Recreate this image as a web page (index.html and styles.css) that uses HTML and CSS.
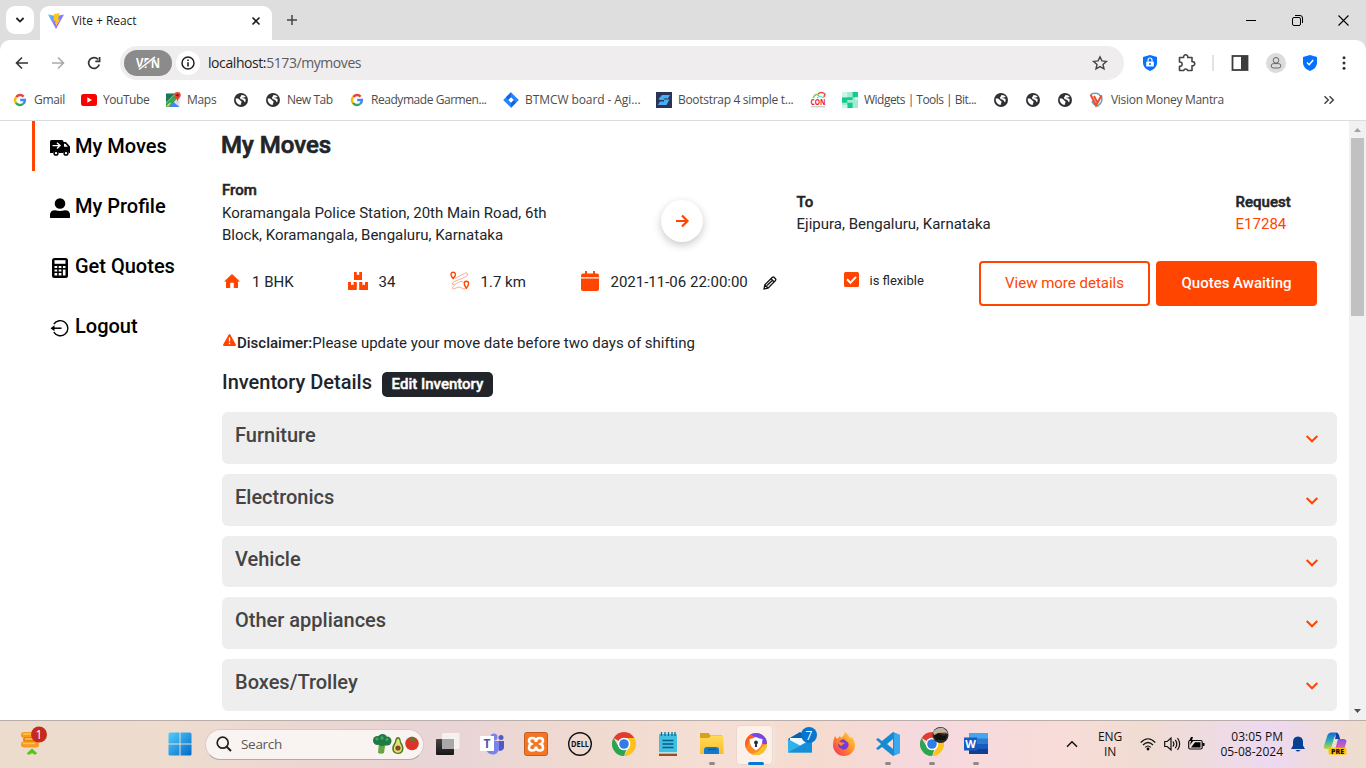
FILE: index.html
```html
<!DOCTYPE html>
<html lang="en">
<head>
<meta charset="utf-8">
<title>Vite + React</title>
<link rel="stylesheet" href="styles.css">
</head>
<body>
<svg class="defs" width="0" height="0">
  <defs>
    <symbol id="globe" viewBox="0 0 16 16"><circle cx="8" cy="8" r="7" fill="#303134"/><path d="M2.800 6.500c1.800-.2 3.200.2 3.700 1.300.5 1 1.700.7 2 1.900.2 1-.8 1.700-.7 3.300C4.800 12.700 2.300 10.200 2.800 6.500zM8.400 3c1.500-.2 3.700.5 4.400 2-1.100.5-3 .2-3.500 1 .8.400 2.600.2 3.200 1.200.5.900.2 2.200-.7 3-.8-.6-.8-1.700-1.700-2.200C8.900 7.500 7.100 7.300 7 5.800 7 4.500 8.400 4.400 8.400 3z" fill="#fff"/></symbol>
    <symbol id="google" viewBox="0 0 16 16"><g fill="none" stroke-width="2.400"><path d="M4.200 4.900A4.900 4.900 0 0 1 11.600 4.600" stroke="#ea4335"/><path d="M3.900 10.800A4.900 4.900 0 0 1 4.200 4.900" stroke="#fbbc05"/><path d="M11.100 11.900A4.900 4.900 0 0 1 3.900 10.800" stroke="#34a853"/><path d="M8.200 8h4.700a4.900 4.900 0 0 1-1.800 3.900" stroke="#4285f4"/></g></symbol>
    <symbol id="chrome" viewBox="0 0 24 24"><path d="M12 0a12 12 0 0 1 10.400 6H12a6 6 0 0 0-5.200 3L1.600 6A12 12 0 0 1 12 0z" fill="#e33b2e"/><path d="M22.400 6A12 12 0 0 1 12 24l5.200-9a6 6 0 0 0 0-6L15 6z" fill="#fcc31e"/><path d="M1.600 6l5.200 9a6 6 0 0 0 7.500 2.600L12 24A12 12 0 0 1 1.600 6z" fill="#2da44e"/><circle cx="12" cy="12" r="6.200" fill="#fff"/><circle cx="12" cy="12" r="4.800" fill="#2f7de9"/></symbol>
    <symbol id="chev" viewBox="0 0 14 10"><path d="M1.700 2l5.300 5.300L12.300 2" fill="none" stroke="#ff4500" stroke-width="2"/></symbol>
    <linearGradient id="win" gradientUnits="userSpaceOnUse" x1="0" y1="0" x2="24" y2="24"><stop offset="0" stop-color="#53d0fb"/><stop offset="1" stop-color="#0067c9"/></linearGradient>
    <linearGradient id="vite" x1="0" y1="0" x2="1" y2="1"><stop offset="0" stop-color="#41c8ff"/><stop offset="1" stop-color="#bd34fe"/></linearGradient>
    <linearGradient id="fold" x1="0" y1="0" x2="0" y2="1"><stop offset="0" stop-color="#ffda58"/><stop offset="1" stop-color="#f9bd2b"/></linearGradient>
    <linearGradient id="fox" x1="1" y1="0" x2="0" y2="1"><stop offset="0" stop-color="#ffe04a"/><stop offset=".5" stop-color="#ff8a26"/><stop offset="1" stop-color="#f0286a"/></linearGradient>
    <linearGradient id="cop1" x1="0" y1="0" x2="0" y2="1"><stop offset="0" stop-color="#1669d5"/><stop offset=".5" stop-color="#2aaeb4"/><stop offset="1" stop-color="#c0d831"/></linearGradient>
    <linearGradient id="cop2" x1="0" y1="0" x2="0" y2="1"><stop offset="0" stop-color="#8456e8"/><stop offset="1" stop-color="#f5609b"/></linearGradient>
    <linearGradient id="dark" x1="0" y1="0" x2="0" y2="1"><stop offset="0" stop-color="#454545"/><stop offset="1" stop-color="#171717"/></linearGradient>
  </defs>
</svg>

<header class="tabstrip">
  <div class="tab-search"><svg width="10" height="8" viewBox="0 0 10 8"><path d="M1.400 2l3.600 3.600L8.600 2" fill="none" stroke="#1f1f1f" stroke-width="1.800"/></svg></div>
  <div class="tab">
    <svg width="16" height="16" viewBox="0 0 16 16"><path d="M0 1.500L8 16l8-14.500L8 3z" fill="url(#vite)"/><path d="M11.500 0L6 1.100 5.600 8l2-.4L7 11l1.200-.4-.8 3.800L12 6.500l-1.900.3z" fill="#ffc51d"/></svg>
    <span class="tab-title">Vite + React</span>
    <svg class="tab-close" width="10" height="10" viewBox="0 0 10 10"><path d="M1.500 1.500l7 7M8.500 1.500l-7 7" stroke="#1f1f1f" stroke-width="1.600"/></svg>
  </div>
  <svg class="new-tab" width="12" height="12" viewBox="0 0 12 12"><path d="M6 1v10M1 6h10" stroke="#444" stroke-width="1.500"/></svg>
  <div class="win-buttons">
    <svg width="10" height="10" viewBox="0 0 10 10"><path d="M0 5.500h10" stroke="#000"/></svg>
    <svg width="11" height="11" viewBox="0 0 11 11"><rect x=".5" y="2.500" width="8" height="8" rx="1.500" fill="none" stroke="#000"/><path d="M3 .5h5A2.500 2.500 0 0 1 10.500 3v5" fill="none" stroke="#000"/></svg>
    <svg width="11" height="11" viewBox="0 0 11 11"><path d="M.5.5l10 10M10.500.5l-10 10" stroke="#000" stroke-width="1.100"/></svg>
  </div>
</header>

<div class="toolbar-back">
<nav class="toolbar">
  <svg class="nav-btn" width="16" height="16" viewBox="0 0 16 16"><path d="M14 8H3M8 2.500L2.500 8 8 13.500" fill="none" stroke="#333" stroke-width="1.600"/></svg>
  <svg class="nav-btn" width="16" height="16" viewBox="0 0 16 16"><path d="M2 8h11M8 2.500L13.500 8 8 13.500" fill="none" stroke="#aaa" stroke-width="1.600"/></svg>
  <svg class="nav-btn" width="16" height="16" viewBox="0 0 16 16"><path d="M13.200 9.500A5.400 5.400 0 1 1 12 4.300M13.600 2v4.300H9.300" fill="none" stroke="#333" stroke-width="1.700"/></svg>
  <div class="omnibox">
    <div class="vpn"><svg width="26" height="14" viewBox="0 0 26 14"><text x="1" y="11.800" class="vpn-text" textLength="24" lengthAdjust="spacingAndGlyphs">VPN</text><path d="M4.500 13.500L19 .8" stroke="#8b8b8b" stroke-width="3.200"/><path d="M4 13.500L20 .8" stroke="#fff" stroke-width="1.500"/></svg></div>
    <div class="info"><svg width="14" height="14" viewBox="0 0 14 14"><circle cx="7" cy="7" r="6" fill="none" stroke="#222" stroke-width="1.500"/><path d="M7 6.200v4.200M7 3.500v1.600" stroke="#222" stroke-width="1.600"/></svg></div>
    <span class="url"><b>localhost:</b>5173/mymoves</span>
    <svg class="star" width="16" height="16" viewBox="0 0 16 16"><path d="M8 1.800l1.900 4.100 4.500.5-3.400 3 1 4.500L8 11.600l-4 2.300 1-4.500-3.400-3 4.500-.5z" fill="none" stroke="#444" stroke-width="1.400"/></svg>
  </div>
  <div class="extensions">
    <svg width="14" height="16" viewBox="0 0 14 16"><path d="M7 0l7 2v5.500c0 4-2.800 6.900-7 8.500-4.200-1.600-7-4.500-7-8.500V2z" fill="#0572ff"/><rect x="3.200" y="6.500" width="7.600" height="5" rx=".6" fill="#fff"/><path d="M5 6.500V5a2 2 0 0 1 4 0v1.500" fill="none" stroke="#fff" stroke-width="1.200"/><circle cx="7" cy="9" r="1" fill="#0572ff"/></svg>
    <svg class="puzzle" width="20" height="20" viewBox="0 0 20 20"><path d="M4 4.500h3.700a2.100 2.100 0 1 1 4 0h4.300v4.200a2.100 2.100 0 1 1 0 4v4.800h-4.300a2.100 2.100 0 0 0-4 0H3.500v-4.200a2.200 2.200 0 1 0 0-4.300V4.500z" fill="none" stroke="#444" stroke-width="1.600" stroke-linejoin="round"/></svg>
    <i class="divider"></i>
    <svg class="panel" width="18" height="18" viewBox="0 0 18 18"><rect x="1.500" y="2" width="15" height="14" fill="#fff" stroke="#3c3c3c" stroke-width="1.800"/><path d="M10 2h7v14h-7z" fill="#3c3c3c"/></svg>
    <svg class="person" width="20" height="20" viewBox="0 0 20 20"><circle cx="10" cy="10" r="10" fill="#dcdcdc"/><circle cx="10" cy="7.300" r="2.800" fill="none" stroke="#666"/><rect x="5.200" y="10.600" width="9.600" height="4.400" rx="2.200" fill="none" stroke="#666"/></svg>
    <svg class="shield" width="14" height="16" viewBox="0 0 14 16"><path d="M7 0l7 2v5.500c0 4-2.800 6.900-7 8.500-4.200-1.600-7-4.500-7-8.500V2z" fill="#0572ff"/><path d="M4 7.500L6.200 9.700 10.200 5" fill="none" stroke="#fff" stroke-width="1.500"/></svg>
    <svg class="menu" width="4" height="14" viewBox="0 0 4 14"><g fill="#333"><circle cx="2" cy="1.700" r="1.500"/><circle cx="2" cy="7" r="1.500"/><circle cx="2" cy="12.300" r="1.500"/></g></svg>
  </div>
</nav>
</div>

<nav class="bookmarks">
  <span style="width:69px"><svg><use href="#google"/></svg>Gmail</span>
  <span class="tight" style="width:84px"><svg viewBox="0 0 16 16"><rect y="2" width="16" height="12" rx="2.500" fill="#f00"/><path d="M6.300 5.300v5.400L11 8z" fill="#fff"/></svg>YouTube</span>
  <span style="width:68px"><svg viewBox="0 0 16 16"><path d="M1 1.500h13.500V15H1z" fill="#dcdcdc"/><path d="M1 1.500h9L1 10.500z" fill="#16795a"/><path d="M1 15v-4L10 2h3v3L5 15z" fill="#34a853"/><path d="M3.500 15l5-5 6 5z" fill="#4285f4"/><path d="M1.500 14L5 10.500l1 1L3 15z" fill="#f5d04a"/><path d="M12.500 0A3.300 3.300 0 0 1 15.800 3.300c0 2.500-2.800 3-3.300 6.500-.5-3.500-3.300-4-3.300-6.500A3.300 3.300 0 0 1 12.500 0z" fill="#ea4335"/><circle cx="12.500" cy="3.300" r="1.200" fill="#7d1711"/></svg>Maps</span>
  <span style="width:32px"><svg><use href="#globe"/></svg></span>
  <span class="tight" style="width:84px"><svg><use href="#globe"/></svg>New Tab</span>
  <span class="tight" style="width:154px"><svg><use href="#google"/></svg>Readymade Garmen...</span>
  <span class="loose" style="width:153px"><svg viewBox="0 0 16 16"><path d="M8 .2L15.800 8 8 15.800.2 8z" fill="#2684ff"/><path d="M8 .2v5L5.300 8 3 5.200zM8 15.800v-5.100L10.700 8l2.300 2.800z" fill="#1264dc"/><path d="M8 5.300L10.700 8 8 10.700 5.300 8z" fill="#fff"/></svg>BTMCW board - Agi...</span>
  <span style="width:154px"><svg viewBox="0 0 16 16"><path d="M0 0h16v16H0z" fill="#2a3457"/><path d="M6 3h8l-2 3.500H7.500L8.500 8H4L2.500 7zM8 7.500h5.500L10.500 13H2l2-3.500h4z" fill="#48aef5"/></svg>Bootstrap 4 simple t...</span>
  <span style="width:32px"><svg viewBox="0 0 16 16"><path d="M3 6q3-6 6-2" fill="none" stroke="#6cdc3c" stroke-width="1.500"/><path d="M8 2q3-3 7 0l-1 3" fill="none" stroke="#f54336" stroke-width="1.500"/><path d="M7 6l3-2 4 2" fill="none" stroke="#39d7d0"/><text x="0.500" y="13" class="con-text" textLength="15" lengthAdjust="spacingAndGlyphs">CON</text><path d="M1 14.800h14" stroke="#bbb"/></svg></span>
  <span class="tight2" style="width:151px"><svg viewBox="0 0 16 16"><path d="M0 0h16v16H0z" fill="#a3ead0"/><path d="M0 5.300h5.300v5.400H0zM10.600 0H16v5.300h-5.400zM5.300 10.700h5.300V16H5.300zM5.300 5.300h5.300v2.700H5.300z" fill="#10cc93"/><path d="M0 0h5.300v5.300H0zM13 5.300h3v3h-3zM0 13h5.300v3H0z" fill="#cdf5e7"/></svg>Widgets | Tools | Bit...</span>
  <span style="width:32px"><svg><use href="#globe"/></svg></span>
  <span style="width:32px"><svg><use href="#globe"/></svg></span>
  <span style="width:32px"><svg><use href="#globe"/></svg></span>
  <span><svg viewBox="0 0 16 16"><path d="M2 2q8-2 9 2M12 3q3 6-3 11-5-1-6-5" fill="none" stroke="#62a8bb" stroke-width="1.500"/><path d="M1.500 2.500L7 13.500 12.500 3.500M5 4l3 6" fill="none" stroke="#ee4a2d" stroke-width="2"/></svg>Vision Money Mantra</span>
  <svg class="more" viewBox="0 0 12 10"><path d="M1.500 1.200L5.300 5 1.500 8.800M6.500 1.200L10.300 5 6.500 8.800" fill="none" stroke="#444" stroke-width="1.500"/></svg>
</nav>

<div class="page">
  <aside class="sidebar">
    <a class="side-item active"><svg viewBox="0 0 20 20"><path d="M1.500 2H12a1.500 1.500 0 0 1 1.500 1.500V4H16l4 4.500V15h-1.200a2.800 2.800 0 0 0-5.500 0H8.700a2.800 2.800 0 0 0-5.500 0H0V3.500A1.500 1.500 0 0 1 1.500 2z"/><path d="M2.500 7.600h7M7 4.800l3 2.800-3 2.800" fill="none" stroke="#fff" stroke-width="1.400"/><path d="M14 5.700h1.500L17.800 8.700H14z" fill="#fff"/><g fill="#fff" stroke="#000" stroke-width="1.500"><circle cx="6" cy="15.200" r="1.900"/><circle cx="16" cy="15.200" r="1.900"/></g></svg>My Moves</a>
    <a class="side-item"><svg viewBox="0 0 20 20"><circle cx="10" cy="5.500" r="5.300"/><path d="M0 19.500V17q0-4.500 5-4.700 5 1.200 10 0 5 .2 5 4.700v2.500q0 .5-1 .5H1q-1 0-1-.5z"/></svg>My Profile</a>
    <a class="side-item"><svg viewBox="0 0 20 20"><rect x="2" y="0" width="16" height="20" rx="2.500"/><path d="M4.500 2.200h11v3.600h-11z" fill="#fff"/><g fill="#fff"><path d="M4.500 8h2.700v2H4.500zM8.700 8h2.700v2H8.700zM12.900 8h2.600v2h-2.600zM4.500 11.500h2.700v2H4.500zM8.700 11.500h2.700v2H8.700zM4.500 15h2.700v2.600H4.500zM8.700 15h2.700v2.600H8.700zM12.900 11.500h2.600v6.100h-2.600z"/></g></svg>Get Quotes</a>
    <a class="side-item"><svg viewBox="0 0 20 20"><path d="M3.800 6.200A7.600 7.600 0 1 1 3.800 14.200" fill="none" stroke="#000" stroke-width="1.400"/><path d="M2 10.200h9.500" stroke="#000" stroke-width="1.500"/><path d="M.5 10.200L4.500 7.200v6z"/></svg>Logout</a>
  </aside>

  <main class="content">
    <h1>My Moves</h1>
    <section class="route">
      <div class="from"><strong>From</strong><p>Koramangala Police Station, 20th Main Road, 6th<br>Block, Koramangala, Bengaluru, Karnataka</p></div>
      <div class="arrow"><svg width="14" height="14" viewBox="0 0 14 14"><path d="M1 7h11M7 1.500L12.500 7 7 12.500" fill="none" stroke="#ff4500" stroke-width="2.200"/></svg></div>
      <div class="to"><strong>To</strong><p>Ejipura, Bengaluru, Karnataka</p></div>
      <div class="request"><strong>Request</strong><p>E17284</p></div>
    </section>

    <section class="stats">
      <div class="stat home"><svg width="16" height="14" viewBox="0 0 16 14"><path d="M8 0l8 7.500h-2V14H9.800V8.700H6.200V14H2V7.500H0z"/></svg>1 BHK</div>
      <div class="stat boxes"><svg width="20" height="18" viewBox="0 0 20 18"><path d="M6 0h2.800v3.300l1.200-.8 1.200.8V0H14v8H6zM0 10h3v3.200l1.300-.8 1.300.8V10H8.800v8H0zM11.200 10h3.200v3.200l1.300-.8 1.300.8V10h3v8h-8.800z"/></svg>34</div>
      <div class="stat km"><svg width="20" height="20" viewBox="0 0 20 20"><path d="M5 7.500L12 3.800q5-3.300 5.700-.8.400 1.900-2.700 3.200L5 10.200q-4 2-2.600 3 1.200 1 4-.6 5-3.500 6.700-1.500M4.500 14.500q-3 2-1.800 3 1.300.8 4-.7 3-1.600 4.500 0 2.500 2.300 6 0" fill="none" stroke="#ff9874" stroke-width=".8"/><path d="M3.200 1.200A2.200 2.200 0 0 1 5.400 3.400q0 1.600-2.200 4.100Q1 5 1 3.400a2.200 2.200 0 0 1 2.200-2.200zM16.400 10.300a2.200 2.200 0 0 1 2.200 2.200q0 1.800-2.200 4.600-2.200-2.800-2.200-4.600a2.200 2.200 0 0 1 2.200-2.200z" fill="#fff" stroke="#ff4500" stroke-width="1.400"/></svg>1.7 km</div>
      <div class="stat date"><svg width="18" height="20" viewBox="0 0 18 20"><path d="M4 0h2v2.500h6V0h2v2.500h2A2 2 0 0 1 18 4.500V6.200H0V4.500a2 2 0 0 1 2-2h2zM0 7.500h18V18a2 2 0 0 1-2 2H2a2 2 0 0 1-2-2z"/></svg>2021-11-06 22:00:00
        <svg class="pencil" width="14" height="14" viewBox="0 0 14 14"><path d="M1 13l.8-4.300L9.400 1.200Q10.300.6 11.200 1.500l1.300 1.300q.8.900 0 1.700L5 12.200zM8 2.700L11.200 6M2 9l3 3M4 9.500L9.800 4" fill="none" stroke="#111" stroke-width="1.300"/></svg></div>
      <div class="flex-check"><svg width="15" height="15" viewBox="0 0 15 15"><rect width="15" height="15" rx="1.500" fill="#ff4500"/><path d="M3 7.300l3.400 3.400L12 4.900" fill="none" stroke="#fff" stroke-width="2"/></svg>is flexible</div>
      <div class="actions"><button class="btn outline">View more details</button><button class="btn solid">Quotes Awaiting</button></div>
    </section>

    <p class="disclaimer"><svg width="13" height="12" viewBox="0 0 13 12"><path d="M6.500 0Q7 0 7.400.7l5.400 9.800Q13.300 12 12 12H1Q-.3 12 .2 10.500L5.600.7Q6 0 6.500 0z" fill="#ff4500"/><path d="M6.500 3.500v4M6.500 8.700v1.500" stroke="#fff" stroke-width="1.300"/></svg><b>Disclaimer:</b>Please update your move date before two days of shifting</p>

    <div class="inventory-head"><h2>Inventory Details</h2><button class="edit">Edit Inventory</button></div>
    <div class="accordion">
      <div class="acc"><span>Furniture</span><svg><use href="#chev"/></svg></div>
      <div class="acc"><span>Electronics</span><svg><use href="#chev"/></svg></div>
      <div class="acc"><span>Vehicle</span><svg><use href="#chev"/></svg></div>
      <div class="acc"><span>Other appliances</span><svg><use href="#chev"/></svg></div>
      <div class="acc"><span>Boxes/Trolley</span><svg><use href="#chev"/></svg></div>
    </div>
  </main>

  <div class="scrollbar">
    <svg width="7" height="4" viewBox="0 0 7 4"><path d="M0 4l3.500-4L7 4z" fill="#a3a3a3"/></svg>
    <i class="thumb"></i>
    <svg class="down" width="7" height="4" viewBox="0 0 7 4"><path d="M0 0l3.500 4L7 0z" fill="#505050"/></svg>
  </div>
</div>

<footer class="taskbar">
  <div class="weather"><svg width="28" height="30" viewBox="0 0 28 30"><g fill="#f59b20"><rect x="1" y="6" width="17" height="6" rx="3"/><rect x="3" y="11" width="17" height="5.500" rx="2.700" fill="#e98111"/><rect x="1" y="15.500" width="18" height="6" rx="3"/></g><path d="M3 8h12M5 13h12M3 17.500h12" stroke="#ffc457" stroke-width="1.400"/><path d="M12 22.500l5 4.600-1 1.400h-2L12 27l-2 1.500H7.500L7 27z" fill="#5bc414"/><circle cx="19" cy="8.500" r="8" fill="#c42b1c"/><text x="19" y="13" text-anchor="middle" class="badge-text">1</text></svg></div>
  <div class="apps">
    <svg class="start" width="24" height="24" viewBox="0 0 24 24"><path d="M.5 2q0-1.500 1.500-1.500h9.500v11H.5zM12.500.5H22q1.500 0 1.500 1.500v9.500h-11zM.5 12.500h11v11H2q-1.500 0-1.500-1.500zM12.500 12.500h11V22q0 1.500-1.500 1.500h-9.500z" fill="url(#win)"/></svg>
    <div class="search"><svg width="16" height="16" viewBox="0 0 16 16"><circle cx="6.700" cy="6.700" r="5.500" fill="none" stroke="#222" stroke-width="1.700"/><path d="M10.700 10.700L15 15" stroke="#222" stroke-width="2"/></svg><span>Search</span>
      <svg class="veg" width="46" height="21" viewBox="0 0 46 21"><path d="M6 8l-1 11q3 1.500 6 0l1-7 4-3z" fill="#64a845"/><g fill="#207a43"><circle cx="4.500" cy="6.500" r="4.500"/><circle cx="9.500" cy="4.500" r="4.500"/><circle cx="14" cy="7" r="4.500"/><circle cx="9" cy="8" r="4"/></g><g fill="#46a661"><circle cx="4" cy="5" r="1.500"/><circle cx="9" cy="4" r="1.700"/><circle cx="14" cy="5.500" r="1.500"/></g><path d="M25 3q2.500 0 3 5 3 4 2.400 7.500Q29.500 20 25 20q-5.500-.5-5.800-5 0-3.500 2.600-7Q22.500 3 25 3z" fill="#4f7a20"/><path d="M25 4.500q1.600.5 2 4.500 2.300 3.500 2 6-.7 3.700-4 3.700-4-.3-4.300-4 .3-3 2.300-6 .5-3.700 2-4.200z" fill="#dce57b"/><circle cx="25" cy="14" r="2.600" fill="#8a471e"/><circle cx="39" cy="9.500" r="6.800" fill="#dc3326"/><path d="M35 4l3 1 1-3 1.500 3 3-1-2 2.500 1 1-3-1-2 1.500V6.500z" fill="#3e8c34"/></svg></div>
    <div class="app"><svg viewBox="0 0 24 24"><rect x="0" y="7" width="18" height="16" rx="1" fill="url(#dark)"/><rect x="6" y="1" width="17.500" height="16" rx="1" fill="#f3f2ef"/><path d="M6 7h12v10H6z" fill="#aaa8a7"/></svg></div>
    <div class="app"><svg viewBox="0 0 24 24"><circle cx="14" cy="5" r="3.500" fill="#7b83eb"/><circle cx="21" cy="5.500" r="2.500" fill="#5059c9"/><path d="M17 9h7v7q-1 3-5 3z" fill="#5059c9"/><path d="M8 9h11v8q-1 5.500-6.500 5.500Q8 22 6 18z" fill="#7b83eb"/><path d="M0 4h14v15H0z" fill="#fff"/><text x="7" y="15.500" text-anchor="middle" class="teams-text">T</text></svg></div>
    <div class="app"><svg viewBox="0 0 24 24"><rect x=".5" y=".5" width="23" height="23" rx="2" fill="#f37623" stroke="#c45b20"/><path d="M8 6q4 0 4 4 0-4 4-4 3 0 3 3 0 2-2 3 2 1 2 3.500 0 3-3 3-4 0-4-4 0 4-4 4-3 0-3-3Q5 13 7 12 5 11 5 9q0-3 3-3z" fill="#f37623" stroke="#fff" stroke-width="2.600"/></svg></div>
    <div class="app"><svg viewBox="0 0 24 24"><circle cx="12" cy="12" r="11.300" fill="none" stroke="#111" stroke-width="1.400"/><text x="3" y="15" class="dell-text" textLength="18" lengthAdjust="spacingAndGlyphs">DELL</text></svg></div>
    <div class="app"><svg><use href="#chrome"/></svg></div>
    <div class="app"><svg viewBox="0 0 24 24"><path d="M3 21h18v3H3z" fill="#975017"/><rect x="3" y="2" width="18" height="20" rx="1" fill="#41bfe2"/><path d="M6.500 8.500h11M6.500 12h11M6.500 15.500h11" stroke="#075e83" stroke-width="1.700"/><path d="M5.500 0v4M9 0v4M12.500 0v4M16 0v4M19 0v4" stroke="#126a8d" stroke-width="1.300"/><path d="M3 20.800h18" stroke="#eee"/></svg></div>
    <div class="app running"><svg viewBox="0 0 24 24"><path d="M0 1h8.500l2 2.500H22V8H0z" fill="#d9a116"/><path d="M0 6h8.500L11 4h12.500v18H0z" fill="url(#fold)"/><path d="M4 22v-4q0-3 3-3h9q3 0 3 3v4z" fill="#117ac9"/><path d="M8 17.500h8" stroke="#075ca3" stroke-width="1.300"/></svg></div>
    <div class="app active running"><svg viewBox="0 0 24 24"><circle cx="12" cy="12" r="11" fill="#fb8a22"/><path d="M6 2.800A11 11 0 0 1 23 12h-4L12 6Q8 3 6 2.800z" fill="#7648ec"/><path d="M23 12A11 11 0 0 1 7 21.800q7 0 11-7z" fill="#f6c32a"/><path d="M6 2.800A11 11 0 0 0 2 16q2-8 8-11-2-2-4-2.200z" fill="#ff5a22"/><path d="M12 5q3.500 2 6.500 2 0 8-6.500 11.500Q5.500 15 5.500 7q3 0 6.500-2z" fill="#fff"/><circle cx="12" cy="10.500" r="1.900" fill="#222b51"/><path d="M11.200 11h1.600l.3 4h-2.200z" fill="#222b51"/></svg></div>
    <div class="app"><svg class="mail" viewBox="0 0 30 28"><path d="M0 12l12-7 12 7v13H0z" fill="#0862ab"/><path d="M2 11h20v8H2z" fill="#eef8ff"/><path d="M0 12l12 6.500L24 12v13.500H0z" fill="#2fb3e7"/><path d="M0 25.500l24-13v13z" fill="#168dd9"/><circle cx="21" cy="8" r="8" fill="#0675cf"/><text x="21" y="12.500" text-anchor="middle" class="badge-text">7</text></svg></div>
    <div class="app"><svg viewBox="0 0 24 24"><path d="M3 4l2 3 3-3 1 2 3-3 1-3q4 3 5 6l2-1q3 4 3 8a11 11 0 0 1-22 0Q1 8 3 4z" fill="url(#fox)"/><path d="M7 10q4-5 7-1 4 2 2 6-3 5-8 1-3-2-1-6z" fill="#793adb"/><path d="M4 9l4 1 5 1-4 3" fill="#ff892a"/></svg></div>
    <div class="app running"><svg viewBox="0 0 24 24"><path d="M17 0l7 3v18l-7 3-11-9-4 3-2-1.500 5-4.500-5-4.500L2 6l4 3zM17 7l-6 5 6 5z" fill="#168bd2" fill-rule="evenodd"/><path d="M18 1l6 2v18l-6 2z" fill="#38a9ef"/></svg></div>
    <div class="app running"><svg class="chrome2" viewBox="0 0 30 30"><use href="#chrome" x="0" y="5" width="24" height="24"/><circle cx="20.500" cy="8" r="8" fill="#292a28"/><path d="M13 5q4-5 10-4 4 2 5 6-3-2-6-2-4 1-8 3z" fill="#b9b4ac"/><path d="M15 7q5-3 10-1" fill="none" stroke="#d99a51"/><path d="M14 9l4-3 5 3 4-1-2 5H16z" fill="#111"/></svg></div>
    <div class="app running"><svg viewBox="0 0 24 24"><path d="M5 1h19v6H5z" fill="#43a6ee"/><path d="M5 6.500h19V12H5z" fill="#2b7cd3"/><path d="M5 12h19v5H5z" fill="#185abd"/><path d="M5 17h19v5H5z" fill="#103f91"/><path d="M0 5.500h13v13H0z" fill="#185abd"/><text x="6.500" y="16" text-anchor="middle" class="word-text">W</text></svg></div>
  </div>
  <div class="tray">
    <svg width="12" height="8" viewBox="0 0 12 8"><path d="M1 6.700L6 1.700l5 5" fill="none" stroke="#111" stroke-width="1.500"/></svg>
    <div class="lang">ENG<br>IN</div>
    <svg width="16" height="14" viewBox="0 0 16 14"><g fill="none" stroke="#111" stroke-width="1.200"><path d="M.7 5.500q7.300-7.500 14.600 0M3 8q5-5 10 0M5.200 10.400q2.800-2.800 5.600 0"/></g><circle cx="8" cy="12" r="1.400"/></svg>
    <svg width="17" height="14" viewBox="0 0 17 14"><g fill="none" stroke="#111" stroke-width="1.200"><path d="M.7 4.500h2.500L7 1v12L3.200 9.500H.7zM9 4.500q1.800 2.500 0 5M11.300 2.800q3 4.200 0 8.400M13.500 1q4.300 6 0 12"/></g></svg>
    <svg width="17" height="14" viewBox="0 0 17 14"><rect x=".7" y="3.500" width="13.500" height="8.500" rx="1.500" fill="none" stroke="#111" stroke-width="1.200"/><path d="M3 10.500L7 5.200h5.500v5.300z"/><path d="M14.500 6h2v3h-2z"/><path d="M3 0L1 4h2L2 8l4-5H4l1-3z"/></svg>
    <div class="clock">03:05 PM<br>05-08-2024</div>
    <svg width="14" height="16" viewBox="0 0 14 16"><path d="M7 .5q5 .3 5 5.500v3.500l2 3.500H0l2-3.500V6Q2 .8 7 .5zM4.500 14h5Q7 17 4.500 14z" fill="#073f92"/></svg>
    <svg width="24" height="24" viewBox="0 0 24 24"><path d="M3 17Q0 17 1 14L4.500 3Q5.500.5 8 .5h5q2 0 2.700 2.500H14q-2 0-3 3L8 17z" fill="url(#cop1)"/><path d="M13 .5q2.500.3 3.200 3L17 7h-5l1-4z" fill="#153e9a"/><path d="M15 7h6q3 .5 2.300 3L21 18h-9z" fill="url(#cop2)"/><rect x="5.500" y="15.800" width="18" height="7" rx="2" fill="#ffc400"/><text x="8" y="22" class="pre-text" textLength="13" lengthAdjust="spacingAndGlyphs">PRE</text></svg>
  </div>
</footer>
</body>
</html>
```

FILE: styles.css
```css
* { box-sizing: border-box; }
body { margin: 0; width: 1366px; height: 768px; overflow: hidden; display: flex; flex-direction: column; font-family: Roboto, sans-serif; color: #212529; background: #fff; }
p, h1, h2 { margin: 0; }
svg { flex: none; display: block; overflow: visible; }
.defs { position: absolute; }

/* Browser chrome */
.tabstrip { height: 40px; background: #dedede; display: flex; padding-left: 6px; font-family: "Open Sans", "Noto Sans", sans-serif; }
.tab-search { width: 28px; height: 28px; margin-top: 6px; background: #fff; border-radius: 9px; display: flex; align-items: center; justify-content: center; }
.tab { margin: 6px 0 0 6px; width: 232px; height: 34px; background: #fff; border-radius: 9px 9px 0 0; display: flex; align-items: center; padding: 0 11px 5px 8px; }
.tab-title { font-size: 12px; letter-spacing: -.05px; margin-left: 8px; color: #1f1f1f; }
.tab-close { margin-left: auto; }
.new-tab { margin: 14px 0 0 14px; }
.win-buttons { margin-left: auto; display: flex; gap: 35.500px; align-items: center; padding-right: 17px; }
.toolbar-back { background: #dedede; }
.toolbar { height: 46px; background: #fff; border-radius: 10px 10px 0 0; display: flex; align-items: center; padding-left: 14px; }
.nav-btn { margin-right: 20px; }
.omnibox { width: 1004px; height: 34px; margin-left: -2px; border-radius: 17px; background: #efedee; display: flex; align-items: center; padding: 0 16px 0 4px; }
.vpn { width: 48px; height: 26px; border-radius: 13px; background: #8b8b8b; display: flex; align-items: center; justify-content: center; }
.vpn-text { font: 700 13.500px "Open Sans", sans-serif; fill: #fff; }
.info { width: 24px; height: 24px; margin-left: 4px; border-radius: 50%; background: #fff; display: flex; align-items: center; justify-content: center; }
.url { margin: -1px 0 0 8px; font: 14px "Open Sans", "Noto Sans", sans-serif; letter-spacing: -.42px; color: #5c5c5c; }
.url b { font-weight: 400; color: #1f1f1f; }
.star { margin-left: auto; }
.extensions { display: flex; align-items: center; padding-left: 19px; }
.puzzle { margin-left: 18.500px; }
.divider { width: 2px; height: 16px; margin-left: 16px; background: #e3e3e3; }
.panel { margin-left: 17.500px; }
.person { margin-left: 17px; }
.shield { margin-left: 17px; }
.menu { margin-left: 25px; }
.bookmarks { height: 35px; padding: 0 31px 7px 12px; border-bottom: 1px solid #dcdcdc; display: flex; align-items: center; font: 12px "Open Sans", "Noto Sans", sans-serif; letter-spacing: -.3px; color: #4c4c4c; white-space: nowrap; }
.bookmarks span { flex: none; display: flex; align-items: center; gap: 6px; }
.bookmarks span svg { width: 16px; height: 16px; }
.bookmarks .tight { letter-spacing: -.45px; }
.bookmarks .tight2 { letter-spacing: -.52px; }
.bookmarks .loose { letter-spacing: -.08px; }
.con-text { font: 700 8px "Open Sans", sans-serif; fill: #ee1831; letter-spacing: 0; }
.bookmarks .more { width: 12px; height: 10px; margin-left: auto; }

/* Page */
.page { height: 599px; display: flex; overflow: hidden; }
.sidebar { width: 190px; padding-left: 32px; display: flex; flex-direction: column; gap: 10px; }
.side-item { height: 50px; display: flex; align-items: center; gap: 5px; padding-left: 15px; border-left: 3px solid transparent; font-size: 20px; font-weight: 500; color: #000; }
.side-item svg { width: 20px; height: 20px; margin-top: 3px; }
.side-item.active { border-left-color: #ff4500; }
.content { flex: 1; padding-left: 32px; }
h1 { font-size: 24px; line-height: 28px; font-weight: 500; -webkit-text-stroke: .7px #212529; margin: 10px 0 20px -1px; }
.route { height: 66px; display: flex; align-items: center; font-size: 15px; line-height: 22px; }
.route strong { display: block; font-weight: 500; -webkit-text-stroke: .5px #212529; }
.from { width: 439px; margin-top: 1px; }
.from p { margin-top: 1px; }
.arrow { width: 42px; height: 42px; margin-top: 17px; border-radius: 50%; display: flex; align-items: center; justify-content: center; box-shadow: 0 3px 8px rgba(0,0,0,.22); }
.to { width: 439px; margin: 2px 0 0 93.600px; }
.request { margin-top: 2px; }
.request p { color: #ff4500; }
.stats { height: 45px; margin-top: 16px; display: flex; align-items: center; font-size: 15px; }
.stat { display: flex; align-items: center; height: 40px; margin-top: -4px; }
.stat > svg:first-child { fill: #ff4500; margin-top: -2px; }
.home { width: 126px; padding-left: 2px; gap: 12px; }
.boxes { width: 102px; gap: 10.500px; }
.km { width: 131px; gap: 10.500px; }
.date { width: 263px; gap: 11.500px; }
.pencil { margin: 2px 0 0 4px; }
.flex-check { width: 135px; font-size: 13px; display: flex; align-items: center; gap: 10.500px; margin-top: -7px; }
.flex-check svg { margin-top: -2px; }
.actions { display: flex; gap: 6px; }
.btn { height: 45px; padding: 0 0 2px; border: 2px solid #ff4500; border-radius: 4px; font: 15px Roboto, sans-serif; color: #ff4500; background: #fff; }
.outline { width: 171px; }
.solid { width: 161px; color: #fff; background: #ff4500; font-weight: 500; }
.disclaimer { display: flex; align-items: center; height: 22px; margin-top: 26px; padding-left: 1px; gap: 1px; font-size: 15px; }
.disclaimer svg { margin-top: -7px; }
.disclaimer b { font-weight: 500; margin-right: -1px; }
.inventory-head { display: flex; align-items: center; height: 25px; margin-top: 18px; }
h2 { width: 160px; font-size: 20px; line-height: 24px; margin-top: -5px; font-weight: 500; }
.edit { width: 111px; height: 25px; padding: 0 0 1px; border: 0; border-radius: 5px; background: #212529; color: #fff; font: 500 15px Roboto, sans-serif; -webkit-text-stroke: .4px #fff; }
.accordion { margin-top: 15.300px; width: 1115px; display: flex; flex-direction: column; gap: 10px; }
.acc { height: 51.700px; border-radius: 6px; background: #eee; display: flex; align-items: flex-start; justify-content: space-between; padding: 11px 18px 0 13px; font-size: 20px; line-height: 24px; font-weight: 500; color: #444; }
.acc svg { width: 14px; height: 10px; margin-top: 11px; }
.scrollbar { width: 17px; background: #f1f1f1; display: flex; flex-direction: column; align-items: center; padding: 7px 0; }
.thumb { width: 13px; height: 178px; margin-top: 6px; background: #c1c1c1; }
.down { margin-top: auto; }

/* Desktop taskbar */
.taskbar { height: 48px; border-top: 1px solid #b9aeaa; display: flex; align-items: center; background: linear-gradient(90deg, #ecdccd 0, #eedccf 13%, #ecd6d2 22%, #e9d5d6 34%, #f0dad0 43%, #f5dfd5 52%, #f5dbcf 60%, #f5d9df 68%, #f8dcd8 78%, #f0dcd2 84%, #eedbe6 90%, #edd9f1 93%, #eedcd5 98%, #efddcf 100%); font-family: "Open Sans", "Noto Sans", sans-serif; color: #111; }
.weather { width: 167.500px; padding-left: 20px; margin-top: -7px; }
.badge-text { font: 12px "Open Sans", sans-serif; fill: #fff; }
.apps { display: flex; align-items: center; margin-top: -1px; }
.start { margin-right: 13px; }
.search { width: 219px; height: 31px; border-radius: 16px; margin: 0 2.500px 0 0; background: #f9f3f1; border: 1px solid #dacac7; border-bottom-color: #b5a8a6; display: flex; align-items: center; padding: 0 4px 0 10px; font-size: 13.500px; letter-spacing: -.3px; color: #5b5655; }
.search span { margin-left: 9.500px; }
.veg { margin-left: auto; }
.app { position: relative; width: 44px; height: 44px; display: flex; align-items: center; justify-content: center; }
.app svg { width: 24px; height: 24px; z-index: 1; }
.app .mail { width: 30px; height: 28px; margin: -6px 0 0 6px; }
.app .chrome2 { width: 30px; height: 30px; margin: -5px 0 0 6px; }
.app.active::before { content: ""; position: absolute; inset: 3px 5px 1px 2px; border-radius: 4px; background: #fcf0e9; border: 1px solid #ead9d0; box-shadow: 2px 0 #f3e4dc; }
.app.running::after { content: ""; position: absolute; bottom: 1px; left: 19px; width: 6px; height: 3px; border-radius: 2px; background: #938784; }
.app.active::after { width: 16px; left: 14px; background: #0678d4; }
.teams-text { font: 700 12px "Open Sans", sans-serif; fill: #4b53bc; }
.dell-text { font: 700 8px "Open Sans", sans-serif; fill: #111; }
.word-text { font: 700 11px "Open Sans", sans-serif; fill: #fff; }
.pre-text { font: 800 7px "Open Sans", sans-serif; fill: #111; }
.tray { margin-left: auto; display: flex; align-items: center; padding-right: 19px; font-size: 12px; line-height: 15px; margin-top: -1px; }
.lang { width: 30px; text-align: center; margin: 0 15px 0 17px; letter-spacing: -.2px; }
.tray svg + svg { margin-left: 7.500px; }
.clock { width: 78px; text-align: right; margin-right: 8px; letter-spacing: 0; }
.tray .clock + svg + svg { margin-left: 18px; }
```
